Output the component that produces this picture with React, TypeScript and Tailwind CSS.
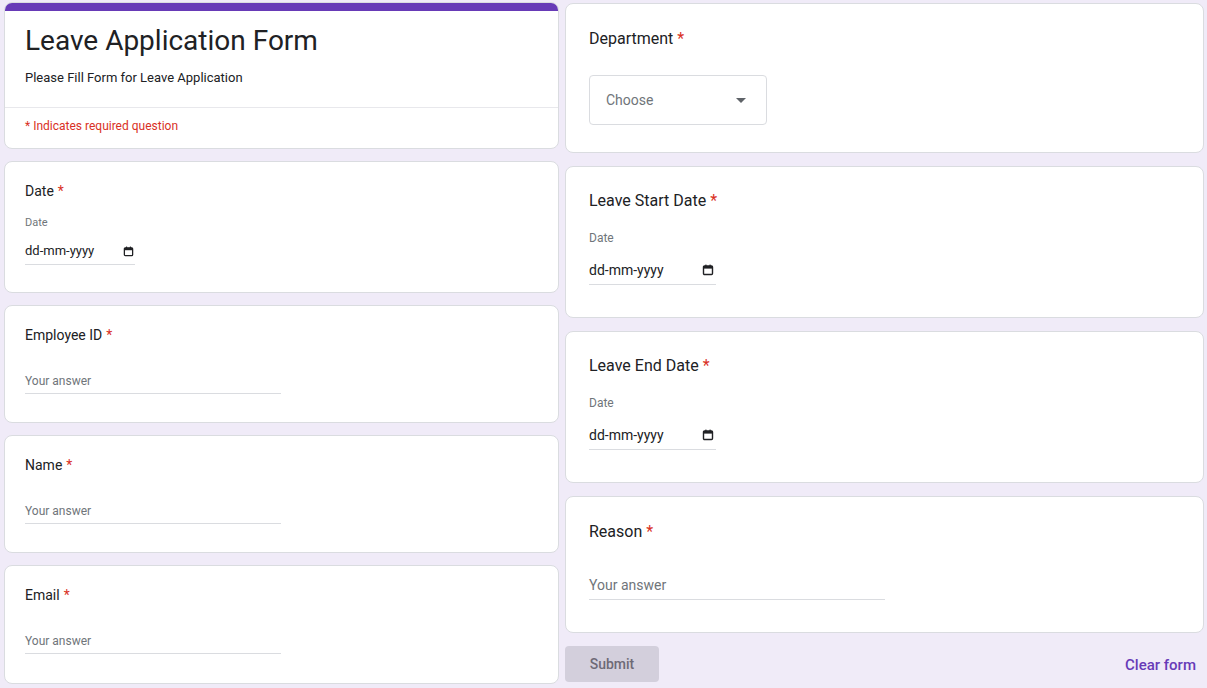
import React from "react";

const font = { fontFamily: "Roboto, 'Liberation Sans', sans-serif" };

const Req = () => <span className="text-[#d93025] ml-1">*</span>;

const CalendarIcon = ({ size = 11 }: { size?: number }) => (
  <svg width={size} height={size} viewBox="0 0 12 12" className="text-[#202124]">
    <rect x="1.5" y="2" width="9" height="8.5" rx="1" fill="none" stroke="currentColor" strokeWidth="1.4" />
    <rect x="1.5" y="2" width="9" height="2.6" fill="currentColor" />
    <rect x="3.3" y="0.6" width="1.2" height="2" fill="currentColor" />
    <rect x="7.5" y="0.6" width="1.2" height="2" fill="currentColor" />
  </svg>
);

const Card = ({ className = "", children }: { className?: string; children: React.ReactNode }) => (
  <div className={"bg-white border border-[#dadce0] rounded-lg " + className}>{children}</div>
);

const SmallTextCard = ({ label, h }: { label: string; h: string }) => (
  <Card className={"px-5 pt-[19px] " + h}>
    <div className="text-[14px] leading-5 text-[#202124]">
      {label}
      <Req />
    </div>
    <div className="mt-[28px] w-[256px] border-b border-[#dadce0] pb-[4px] text-[12px] leading-[16px] text-[#70757a]">
      Your answer
    </div>
  </Card>
);

const BigDateCard = ({ label }: { label: string }) => (
  <Card className="px-[23px] pt-[22px] h-[152px]">
    <div className="text-[16px] leading-6 text-[#202124]">
      {label}
      <Req />
    </div>
    <div className="mt-[17px] text-[12px] leading-4 text-[#70757a]">Date</div>
    <div className="mt-[14px] w-[127px] border-b border-[#dadce0] pb-[4px] flex items-center justify-between pr-[2px]">
      <span className="text-[14px] leading-5 text-[#202124]">dd-mm-yyyy</span>
      <CalendarIcon size={12} />
    </div>
  </Card>
);

export default function App() {
  return (
    <div className="min-h-[688px] w-[1207px] bg-[#f0ebf8] flex gap-[6px] pl-[4px] pr-[3px]" style={font}>
      {/* left column */}
      <div className="w-[555px] flex flex-col gap-[12px] pt-[2px]">
        <div className="bg-white border border-[#dadce0] rounded-lg overflow-hidden h-[147px]">
          <div className="h-[8px] bg-[#673ab7]" />
          <div className="px-5 pt-[13px] border-b border-[#e8e8ec] h-[97px]">
            <div className="text-[28px] leading-[34px] text-[#202124]">Leave Application Form</div>
            <div className="mt-[11px] text-[13px] leading-[18px] text-[#202124]">Please Fill Form for Leave Application</div>
          </div>
          <div className="px-5 pt-[10px] text-[12px] leading-4 text-[#d93025]">* Indicates required question</div>
        </div>

        <Card className="px-5 pt-[19px] h-[132px]">
          <div className="text-[14px] leading-5 text-[#202124]">
            Date
            <Req />
          </div>
          <div className="mt-[15px] text-[11px] leading-[14px] text-[#70757a]">Date</div>
          <div className="mt-[11px] w-[110px] border-b border-[#dadce0] pb-[3px] flex items-center justify-between pr-[1px]">
            <span className="text-[13px] leading-5 text-[#202124]">dd-mm-yyyy</span>
            <CalendarIcon size={11} />
          </div>
        </Card>

        <SmallTextCard label="Employee ID" h="h-[118px]" />
        <SmallTextCard label="Name" h="h-[118px]" />
        <SmallTextCard label="Email" h="h-[119px]" />
      </div>

      {/* right column */}
      <div className="w-[639px] flex flex-col gap-[13px] pt-[3px]">
        <Card className="px-[23px] pt-[23px] h-[150px]">
          <div className="text-[16px] leading-6 text-[#202124]">
            Department
            <Req />
          </div>
          <div className="mt-[24px] w-[178px] h-[50px] border border-[#dadce0] rounded flex items-center justify-between pl-4 pr-5">
            <span className="text-[14px] text-[#70757a]">Choose</span>
            <svg width="10" height="5" viewBox="0 0 10 5">
              <path d="M0 0 L10 0 L5 5 Z" fill="#5f6368" />
            </svg>
          </div>
        </Card>

        <BigDateCard label="Leave Start Date" />
        <BigDateCard label="Leave End Date" />

        <Card className="px-[23px] pt-[23px] h-[137px]">
          <div className="text-[16px] leading-6 text-[#202124]">
            Reason
            <Req />
          </div>
          <div className="mt-[31px] w-[296px] border-b border-[#dadce0] pb-[4px] text-[14px] leading-5 text-[#70757a]">
            Your answer
          </div>
        </Card>

        <div className="flex items-center justify-between">
          <button className="w-[94px] h-[36px] rounded bg-[#d3cfdc] text-[14px] font-medium text-[#6e6a76]">
            Submit
          </button>
          <button className="pr-[8px] pt-[3px] text-[15px] font-medium text-[#673ab7]">Clear form</button>
        </div>
      </div>
    </div>
  );
}
